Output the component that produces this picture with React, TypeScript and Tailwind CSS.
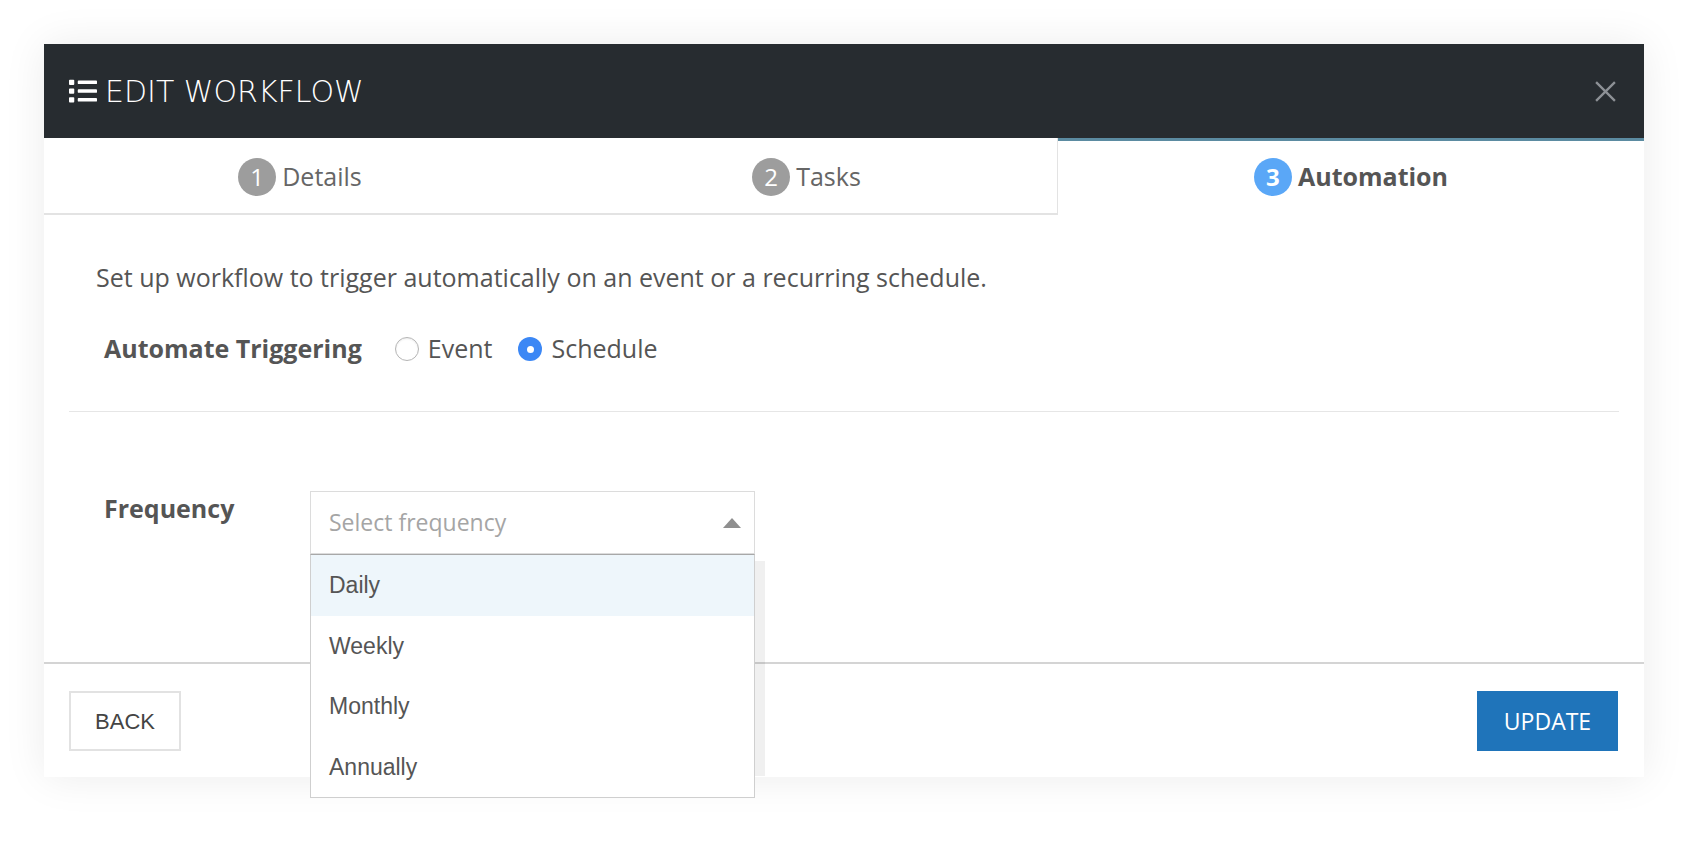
import { FaList } from 'react-icons/fa';

const TABS = [
  { n: 1, label: 'Details', width: 'w-[512px]', active: false },
  { n: 2, label: 'Tasks', width: 'w-[502px]', active: false },
  { n: 3, label: 'Automation', width: 'flex-1', active: true },
];

const OPTIONS = ['Daily', 'Weekly', 'Monthly', 'Annually'];

function Radio({ checked, label }: { checked: boolean; label: string }) {
  return (
    <label className="flex items-center gap-[9px]">
      {checked ? (
        <span className="w-[24px] h-[24px] rounded-full bg-[#3b87f5] flex items-center justify-center">
          <span className="w-[7px] h-[7px] rounded-full bg-white" />
        </span>
      ) : (
        <span className="w-[24px] h-[24px] rounded-full border border-[#b5b5b5] bg-white shadow-[inset_0_1px_2px_rgba(0,0,0,0.08)]" />
      )}
      <span className="text-[25px] text-[#555]">{label}</span>
    </label>
  );
}

export default function App() {
  return (
    <div className="w-[1688px] h-[842px] bg-white pt-[44px] pl-[44px] font-['Open_Sans',sans-serif]">
      <div className="w-[1600px] bg-white relative shadow-[0_0_40px_rgba(0,0,0,0.08)]">
        {/* Header */}
        <div className="h-[94px] bg-[#272c30] flex items-center justify-between pl-[25px] pr-[27px]">
          <div className="flex items-center gap-[8px] text-white">
            <FaList size={28} />
            <span className="text-[30px] font-['DejaVu_Sans',sans-serif] font-light">EDIT WORKFLOW</span>
          </div>
          <svg width="23" height="23" viewBox="0 0 22 22" className="text-[#8d9196]">
            <path d="M2 2L20 20M20 2L2 20" stroke="currentColor" strokeWidth="2.2" />
          </svg>
        </div>

        {/* Tabs */}
        <div className="flex h-[77px]">
          {TABS.map(t => (
            <div
              key={t.n}
              className={
                t.active
                  ? `${t.width} border-t-[3px] border-[#5b8ba1] flex items-center justify-center gap-[6px] pb-[3px]`
                  : `${t.width} border-b-2 border-[#e3e3e3] ${t.n === 2 ? 'border-r' : ''} flex items-center justify-center gap-[6px] pt-[2px]`
              }
            >
              <span
                className={`w-[38px] h-[38px] rounded-full flex items-center justify-center text-[24px] text-white ${
                  t.active ? 'bg-[#5aa7f7] font-bold' : 'bg-[#9d9d9d]'
                }`}
              >
                {t.n}
              </span>
              <span className={`text-[25px] ${t.active ? 'font-bold text-[#555]' : 'text-[#666]'}`}>{t.label}</span>
            </div>
          ))}
        </div>

        {/* Body */}
        <div className="pt-[45px]">
          <p className="px-[52px] text-[25px] leading-[34px] text-[#555]">
            Set up workflow to trigger automatically on an event or a recurring schedule.
          </p>
          <div className="mt-[35px] pl-[60px] h-[40px] flex items-center gap-[33px]">
            <span className="text-[25px] font-bold text-[#555]">Automate Triggering</span>
            <div className="flex items-center gap-[26px]">
              <Radio checked={false} label="Event" />
              <Radio checked={true} label="Schedule" />
            </div>
          </div>
          <div className="mt-[42px] mx-[25px] border-t border-[#e6e6e6]" />

          <div className="mt-[79px] pl-[60px] flex items-start">
            <span className="w-[206px] text-[25px] leading-[34px] font-bold text-[#555]">Frequency</span>
            <div className="relative w-[445px]">
              <div className="h-[63px] border border-[#dcdcdc] flex items-center justify-between pl-[18px] pr-[13px]">
                <span className="text-[23px] text-[#a5a5a5]">Select frequency</span>
                <svg width="18" height="10" viewBox="0 0 18 10">
                  <path d="M0 10L9 0L18 10Z" fill="#8f8f8f" />
                </svg>
              </div>
              <div className="absolute left-full top-[70px] w-[10px] h-[215px] bg-[rgba(0,0,0,0.06)]" />
              <div className="absolute z-10 left-0 right-0 top-full bg-white border border-[#cfcfcf] border-t-[#a8a8a8]">
                {OPTIONS.map((o, i) => (
                  <div
                    key={o}
                    className={`h-[60.5px] flex items-center pl-[18px] text-[23px] text-[#555] font-['Liberation_Sans',sans-serif] ${
                      i === 0 ? 'bg-[#eef6fb]' : ''
                    }`}
                  >
                    {o}
                  </div>
                ))}
              </div>
            </div>
          </div>
          <div className="h-[108px]" />
        </div>

        {/* Footer */}
        <div className="border-t-2 border-[#d4d4d4] flex items-center justify-between pl-[25px] pr-[26px] pt-[27px] pb-[26px]">
          <button className="w-[112px] h-[60px] border-2 border-[#e2e2e2] bg-white text-[22px] text-[#444] font-['Liberation_Sans',sans-serif]">
            BACK
          </button>
          <button className="w-[141px] h-[60px] bg-[#1f74ba] text-white text-[23px]">UPDATE</button>
        </div>
      </div>
    </div>
  );
}
